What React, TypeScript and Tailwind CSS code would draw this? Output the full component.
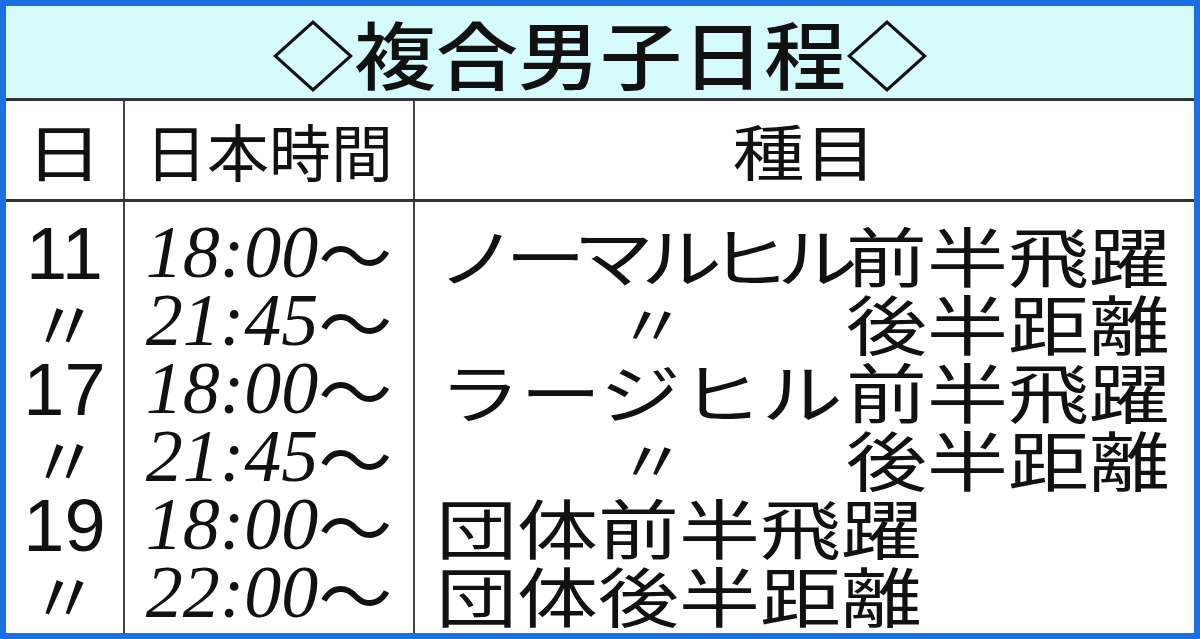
const jp = "font-['Noto_Sans_CJK_JP',sans-serif]"

type Row = {
  day: string
  time: string
  kana?: string
  kanaTrack?: string
  kanji: string
  ditto?: boolean
}

const ROWS: Row[] = [
  { day: '11', time: '18:00', kana: 'ノーマルヒル', kanaTrack: 'tracking-[-13px]', kanji: '前半飛躍' },
  { day: '〃', time: '21:45', ditto: true, kanji: '後半距離' },
  { day: '17', time: '18:00', kana: 'ラージヒル', kanaTrack: 'tracking-[0px]', kanji: '前半飛躍' },
  { day: '〃', time: '21:45', ditto: true, kanji: '後半距離' },
  { day: '19', time: '18:00', kanji: '団体前半飛躍' },
  { day: '〃', time: '22:00', kanji: '団体後半距離' },
]

function DayCell({ day }: { day: string }) {
  if (day === '〃') {
    return (
      <div className="flex h-[68px] items-center justify-center">
        <span className={`${jp} inline-block text-[70px] leading-[60px]`}>〃</span>
      </div>
    )
  }
  return (
    <div className="flex h-[68px] items-center justify-center">
      <span className="inline-block font-['Liberation_Sans',sans-serif] text-[74px] leading-[68px]">
        {day}
      </span>
    </div>
  )
}

function TimeCell({ time }: { time: string }) {
  return (
    <div className="flex h-[68px] items-center justify-center">
      <span className="-mt-[5px] flex items-center font-['Liberation_Serif',serif] text-[74px] italic leading-[68px]">
        <span className="inline-block">{time}</span>
        <span className={`${jp} inline-block not-italic leading-[68px]`}>〜</span>
      </span>
    </div>
  )
}

function EventCell({ row }: { row: Row }) {
  return (
    <div className={`${jp} flex h-[68px] items-center text-[81px] leading-[68px]`}>
      {row.kana || row.ditto ? (
        <div className={`flex w-[410px] shrink-0 justify-center ${row.ditto ? 'pl-[22px]' : ''}`}>
          <span
            className={`inline-block scale-y-[0.8] whitespace-nowrap ${
              row.kana ? row.kanaTrack : 'text-[70px]'
            }`}
          >
            {row.kana || '〃'}
          </span>
        </div>
      ) : null}
      <span className="inline-block scale-y-[0.8] whitespace-nowrap">{row.kanji}</span>
    </div>
  )
}

export default function App() {
  return (
    <div className="flex h-[639px] w-[1200px] flex-col border-[6px] border-[#1c6fe3] bg-white text-[#111]">
      <div className="flex h-[95px] shrink-0 items-center justify-center border-b-[3px] border-[#333] bg-[#d5fbfd]">
        <span className={`${jp} inline-block scale-y-[0.9] text-[82px] font-medium leading-[82px]`}>
          ◇複合男子日程◇
        </span>
      </div>

      <div className={`${jp} flex h-[101px] shrink-0 border-b-[3px] border-[#333] text-[62px]`}>
        <div className="flex w-[119px] shrink-0 items-center justify-center border-r-2 border-[#444]">
          <span className="inline-block scale-x-[1.25] leading-none">日</span>
        </div>
        <div className="flex w-[290px] shrink-0 items-center justify-center border-r-2 border-[#444]">
          <span className="inline-block leading-none">日本時間</span>
        </div>
        <div className="flex flex-1 items-center justify-center">
          <span className="inline-block scale-y-[0.85] text-[72px] leading-none">種目</span>
        </div>
      </div>

      <div className="flex flex-1">
        <div className="w-[119px] shrink-0 border-r-2 border-[#444] pt-[18px]">
          {ROWS.map((row, i) => (
            <DayCell key={i} day={row.day} />
          ))}
        </div>
        <div className="w-[290px] shrink-0 border-r-2 border-[#444] pt-[18px]">
          {ROWS.map((row, i) => (
            <TimeCell key={i} time={row.time} />
          ))}
        </div>
        <div className="flex-1 pl-[21px] pt-[18px]">
          {ROWS.map((row, i) => (
            <EventCell key={i} row={row} />
          ))}
        </div>
      </div>
    </div>
  )
}
